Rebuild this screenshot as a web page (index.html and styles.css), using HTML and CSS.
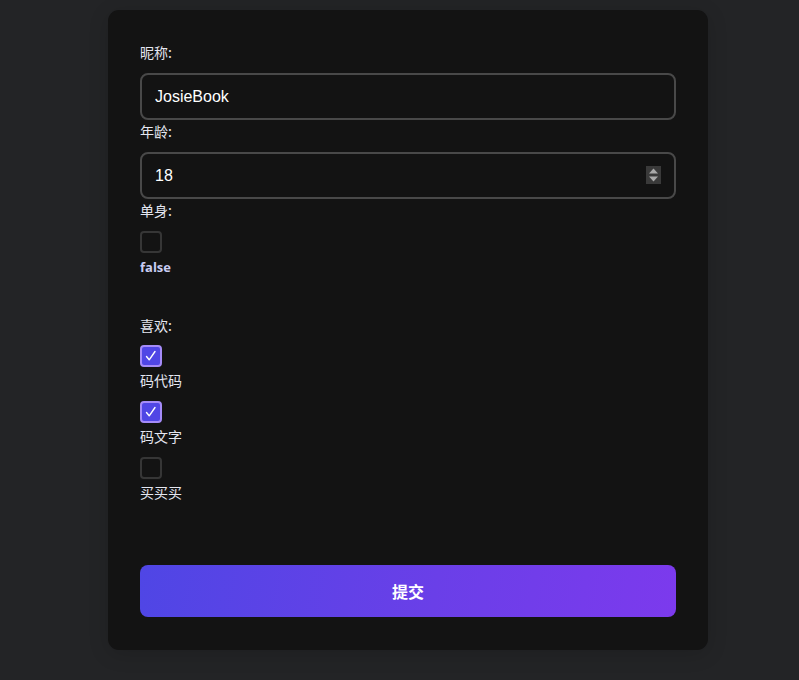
FILE: index.html
```html
<!DOCTYPE html>
<html lang="zh-CN">
<head>
<meta charset="utf-8">
<title>表单</title>
<link rel="stylesheet" href="styles.css">
</head>
<body>
<main class="page">
  <form class="card">
    <label class="field-label" for="nick">昵称:</label>
    <input class="text-input" id="nick" type="text" value="JosieBook">

    <label class="field-label" for="age">年龄:</label>
    <div class="number-wrap">
      <input class="text-input" id="age" type="number" value="18">
      <span class="spinner" aria-hidden="true">
        <svg viewBox="0 0 15 18" width="15" height="18"><rect width="15" height="18" fill="#3a3a3a"/><polygon points="7.5,2.5 12,7.5 3,7.5" fill="#a9a9a9"/><polygon points="3,10.5 12,10.5 7.5,15.5" fill="#a9a9a9"/></svg>
      </span>
    </div>

    <div class="field-label">单身:</div>
    <span class="box"></span>
    <div class="value">false</div>

    <div class="field-label field-label--group">喜欢:</div>
    <div class="options">
      <div class="option">
        <span class="box box--checked"><svg viewBox="0 0 22 22" width="22" height="22"><polyline points="6.5,11.5 9.2,14.8 15,6.5" fill="none" stroke="#fff" stroke-width="1.4" stroke-linecap="round" stroke-linejoin="round"/></svg></span>
        <span class="option-text">码代码</span>
      </div>
      <div class="option">
        <span class="box box--checked"><svg viewBox="0 0 22 22" width="22" height="22"><polyline points="6.5,11.5 9.2,14.8 15,6.5" fill="none" stroke="#fff" stroke-width="1.4" stroke-linecap="round" stroke-linejoin="round"/></svg></span>
        <span class="option-text">码文字</span>
      </div>
      <div class="option">
        <span class="box"></span>
        <span class="option-text">买买买</span>
      </div>
    </div>

    <button class="submit" type="button">提交</button>
  </form>
</main>
</body>
</html>
```

FILE: styles.css
```css
html, body {
  margin: 0;
  padding: 0;
}
body {
  background: #232426;
  font-family: "Noto Sans CJK SC", "Noto Sans", sans-serif;
  color: #e4e6ee;
  min-height: 680px;
}
.page {
  display: flex;
  justify-content: center;
  padding-top: 10px;
  padding-left: 17px;
}
.card {
  width: 600px;
  height: 640px;
  box-sizing: border-box;
  background: #131313;
  border-radius: 11px;
  padding: 31px 32px 32px;
  display: flex;
  flex-direction: column;
  box-shadow: 0 4px 20px rgba(0,0,0,0.15);
}
.field-label {
  display: block;
  font-size: 14px;
  line-height: 22px;
  margin-bottom: 10px;
  color: #e4e6f0;
}
.field-label--group {
  margin-top: 38px;
  margin-bottom: 9px;
}
.number-wrap {
  position: relative;
}
.spinner {
  position: absolute;
  right: 15px;
  top: 14px;
  width: 15px;
  height: 18px;
}
.spinner svg {
  display: block;
}
.text-input {
  display: block;
  box-sizing: border-box;
  height: 47px;
  width: 100%;
  margin: 0;
  background: #131313;
  border: 2px solid #494949;
  border-radius: 8px;
  color: #ffffff;
  font-family: "Liberation Sans", Arial, sans-serif;
  font-size: 16px;
  padding: 0 13px;
  outline: none;
  color-scheme: dark;
  -moz-appearance: textfield;
}
.text-input::-webkit-inner-spin-button,
.text-input::-webkit-outer-spin-button {
  -webkit-appearance: none;
  margin: 0;
}
.box {
  display: block;
  box-sizing: border-box;
  width: 22px;
  height: 22px;
  border: 2px solid #363636;
  border-radius: 4px;
  background: #131313;
  flex: none;
}
.box--checked {
  background: #5046e5;
  border-color: #a58bf8;
}
.box--checked svg {
  display: block;
  margin: -2px;
}
.value {
  margin-top: 5px;
  font-family: "Open Sans", "Noto Sans", sans-serif;
  font-weight: 700;
  font-size: 13px;
  line-height: 18px;
  color: #c9cdf3;
}
.options {
  display: flex;
  flex-direction: column;
  gap: 10px;
}
.option {
  display: flex;
  flex-direction: column;
  align-items: flex-start;
  gap: 2px;
}
.option-text {
  font-size: 14px;
  line-height: 22px;
  color: #e4e6f0;
}
.submit {
  margin-top: auto;
  height: 52px;
  width: 100%;
  border: none;
  border-radius: 8px;
  background: linear-gradient(100deg, #4f46e5 0%, #6a3fe8 55%, #7c3aed 100%);
  color: #ffffff;
  font-family: "Noto Sans CJK SC", sans-serif;
  font-weight: 700;
  font-size: 16px;
  margin-bottom: 1px;
}
```
